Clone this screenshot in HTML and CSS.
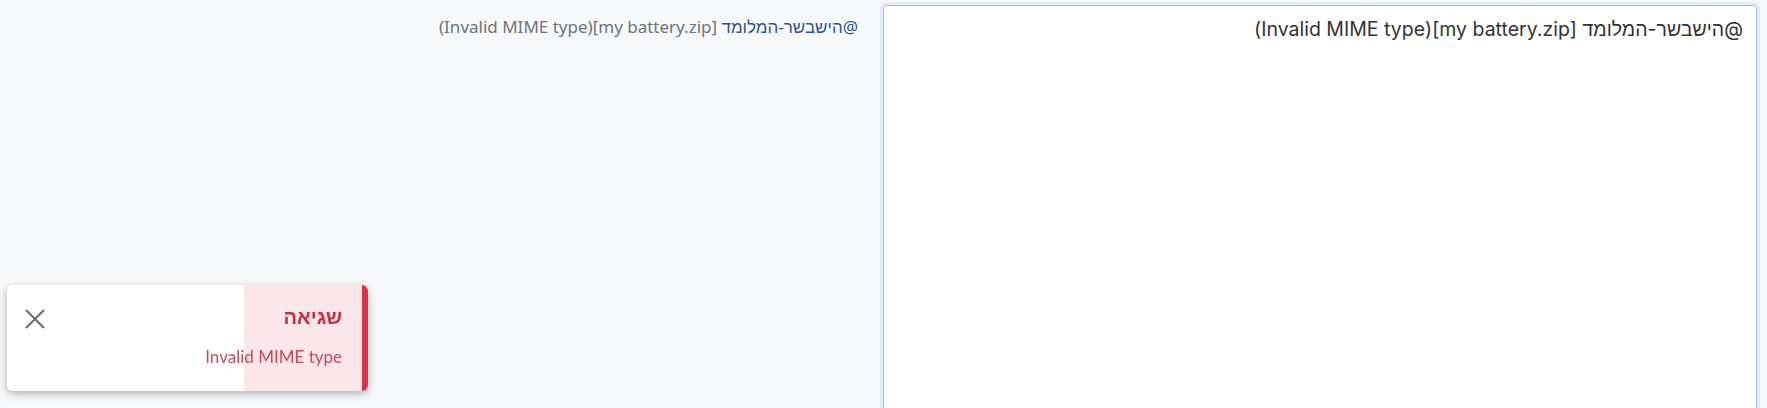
FILE: index.html
```html
<!DOCTYPE html>
<html lang="he" dir="rtl">
<head>
    <meta charset="UTF-8">
    <meta name="viewport" content="width=device-width, initial-scale=1.0">
    <title>תגובה</title>
    <link rel="stylesheet" href="styles.css">
</head>
<body>
    <div class="editor">
        <!-- Source -->
        <textarea class="source" name="body">@הישבשר-המלומד [my battery.zip](Invalid MIME type)</textarea>

        <!-- Rendered preview -->
        <div class="preview">
            <a class="mention" href="#">@הישבשר-המלומד</a> [my battery.zip](Invalid MIME type)
        </div>
    </div>

    <div class="toast">
        <div class="toastBody">
            <strong class="toastTitle">שגיאה</strong>
            <span class="toastMsg">Invalid MIME type</span>
        </div>
        <button class="toastClose" type="button" aria-label="סגור">
            <svg width="20" height="20" viewBox="0 0 20 20"><path d="M1 1 L19 19 M19 1 L1 19" stroke="#6b6b6b" stroke-width="2" fill="none"/></svg>
        </button>
    </div>
</body>
</html>
```

FILE: styles.css
```css
body {
    margin: 0;
    background: #f7f8fa;
    font-family: Lato, "Noto Sans", sans-serif;
    overflow: hidden;
}

.editor {
    display: flex;
    gap: 25px;
    padding: 5px 10px 0 8px;
}

.source {
    width: 874px;
    height: 430px;
    flex: none;
    box-sizing: border-box;
    margin: 0;
    padding: 11px 13px;
    border: 1px solid #a9bcd6;
    border-radius: 4px;
    box-shadow: 0 0 0 3px rgba(190, 215, 245, 0.35);
    background: #fff;
    color: #333;
    font-family: Inter, "Noto Sans", sans-serif;
    font-size: 19.5px;
    resize: none;
    outline: none;
}

.preview {
    flex: 1;
    padding-top: 10px;
    color: #6c757d;
    font-family: "Noto Sans", sans-serif;
    font-size: 17px;
}

.mention {
    color: #2a5594;
    text-decoration: none;
}

.toast {
    position: fixed;
    left: 7px;
    bottom: 17px;
    width: 361px;
    height: 106px;
    box-sizing: border-box;
    display: flex;
    align-items: flex-start;
    justify-content: space-between;
    padding: 19px 20px 0 18px;
    border-right: 6px solid #d7364a;
    border-radius: 6px;
    background: linear-gradient(to left, #fbe6e9 118px, #fff 118px);
    box-shadow: 0 3px 8px rgba(0, 0, 0, 0.28);
}

.toastBody {
    display: flex;
    flex-direction: column;
    gap: 17px;
}

.toastTitle {
    color: #c52f41;
    font-size: 20px;
    font-weight: 800;
}

.toastMsg {
    color: #c84958;
    font-size: 17px;
}

.toastClose {
    margin-top: 5px;
    padding: 0;
    border: 0;
    background: none;
    cursor: pointer;
}
```
